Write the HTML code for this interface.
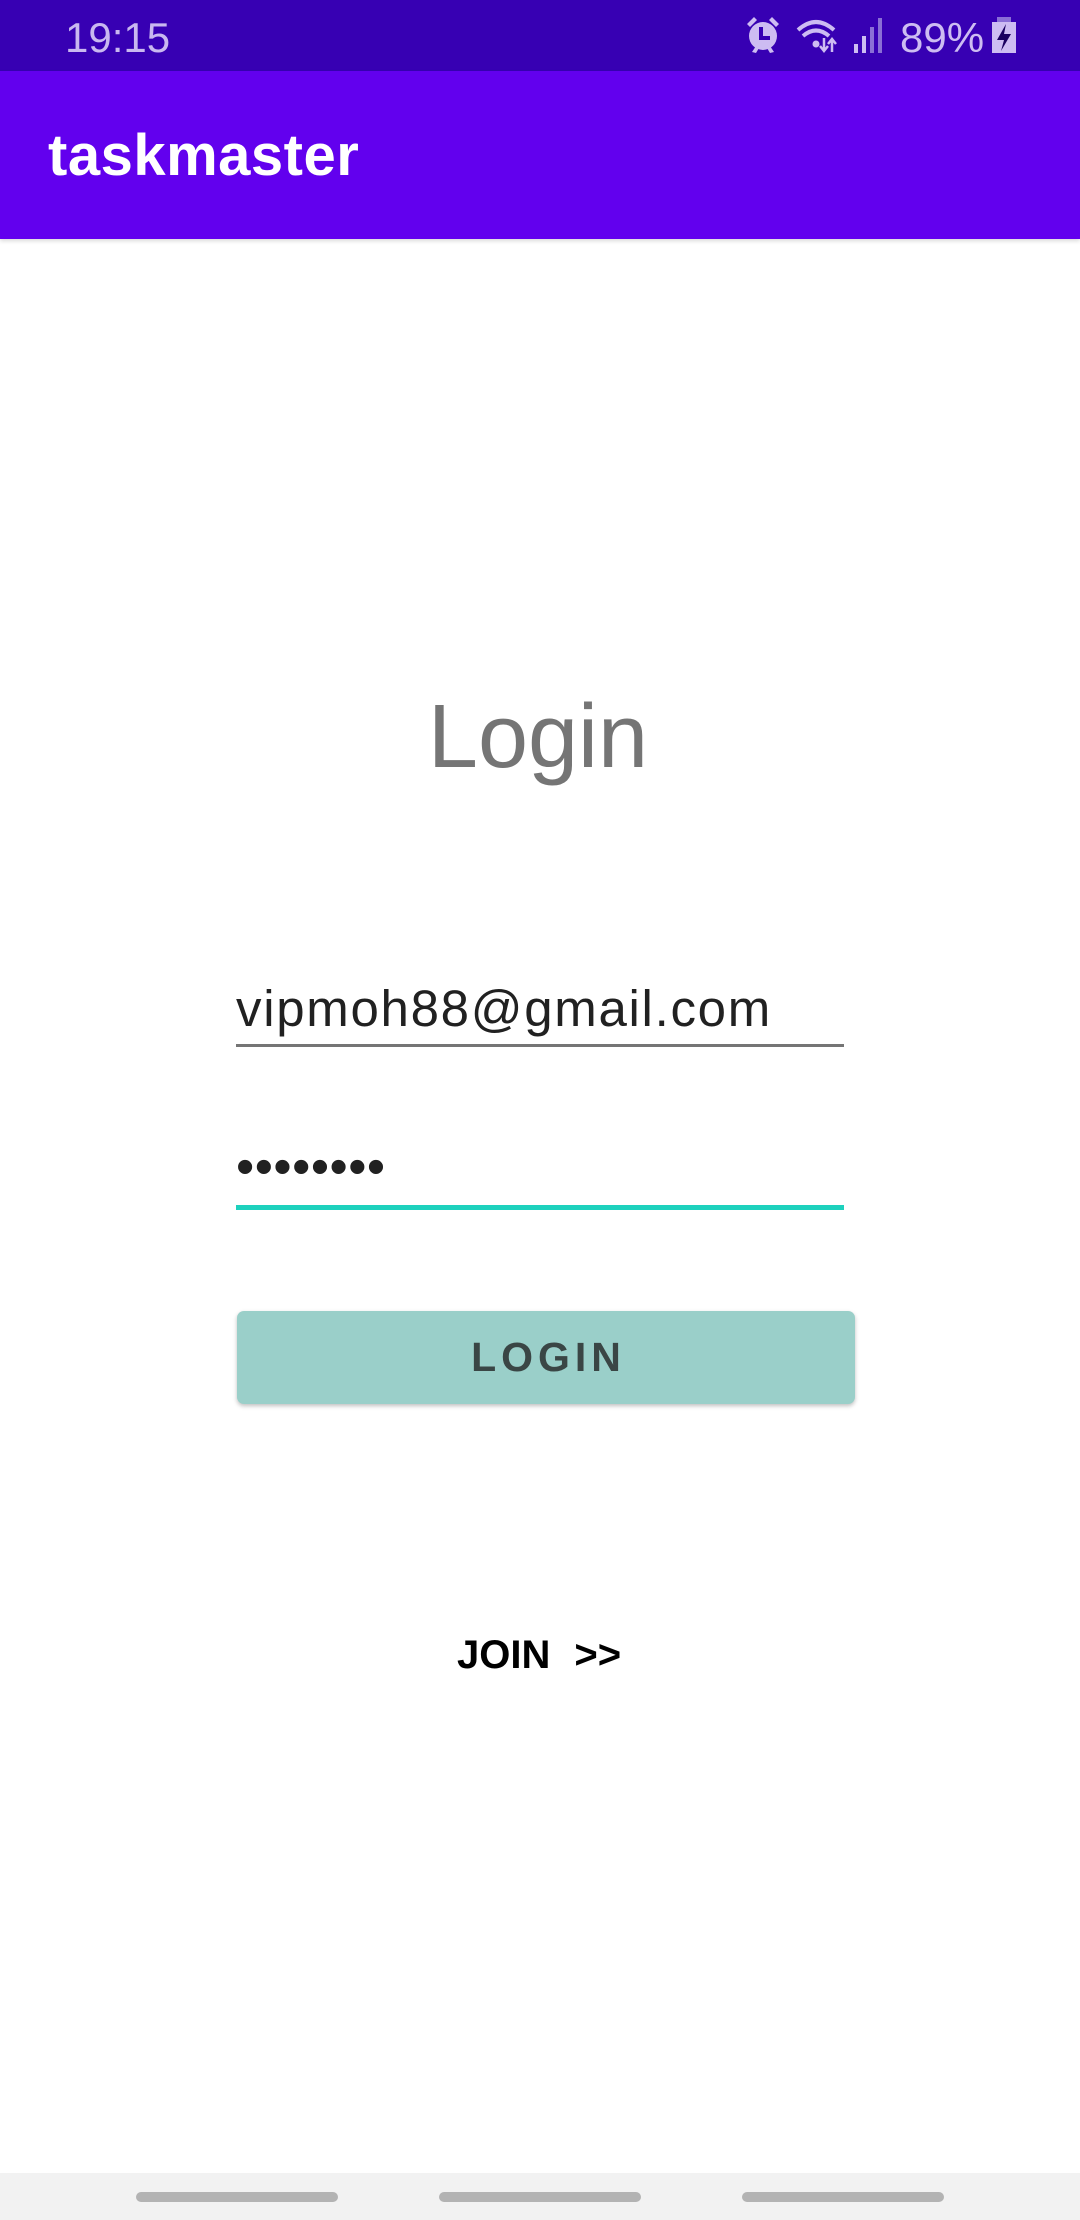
<!DOCTYPE html>
<html><head><meta charset="utf-8"><style>
*{margin:0;padding:0;box-sizing:border-box}
body{width:1080px;height:2220px;position:relative;background:#fff;font-family:"Liberation Sans",sans-serif;overflow:hidden}
.abs{position:absolute}
</style></head><body>
<div class="abs" style="left:0;top:0;width:1080px;height:71px;background:#3700B3"></div>
<div class="abs" style="left:65px;top:13px;font-size:42px;color:#c9b8f0;line-height:50px">19:15</div>
<svg class="abs" style="left:740px;top:14px" width="280" height="44" viewBox="740 14 280 44">
 <g fill="#cdbcf2">
  <circle cx="763" cy="36" r="14"/>
  <path d="M747 24 L754 17 L757 20 L750 27Z M779 24 L772 17 L769 20 L776 27Z"/>
  <path d="M752 52 L756 46 L759 48 L756 53Z M774 52 L770 46 L767 48 L770 53Z"/>
 </g>
 <path d="M761 27 V38 H770" stroke="#3700B3" stroke-width="4" fill="none"/>
 <g fill="none" stroke="#cdbcf2" stroke-width="4">
  <path d="M798 30 Q816 14 834 30"/><path d="M803 36 Q816 25 829 36"/>
 </g>
 <circle cx="816" cy="44" r="3.5" fill="#cdbcf2"/>
 <path d="M824 38 V50 M820 46 L824 51 L828 46 M832 52 V40 M828 44 L832 39 L836 44" stroke="#cdbcf2" stroke-width="2.5" fill="none"/>
 <rect x="854" y="44" width="4" height="9" fill="#cdbcf2"/>
 <rect x="862" y="36" width="4" height="17" fill="#cdbcf2"/>
 <rect x="870" y="27" width="4" height="26" fill="#8a6fd6"/>
 <rect x="878" y="18" width="4" height="35" fill="#8a6fd6"/>
 <rect x="997" y="17" width="14" height="6" fill="#8a6fd6"/>
 <rect x="992" y="22" width="24" height="31" fill="#cdbcf2"/>
 <path d="M1006 24 L997 40 L1004 40 L1001 51 L1011 34 L1004 34 Z" fill="#1a0060"/>
</svg>
<div class="abs" style="left:900px;top:13px;font-size:42px;color:#cdbcf2;line-height:50px">89%</div>

<div class="abs" style="left:0;top:71px;width:1080px;height:168px;background:#6200EE;box-shadow:0 2px 4px rgba(0,0,0,0.15)"></div>
<div class="abs" style="left:48px;top:124px;font-size:58px;color:#fff;font-weight:bold;line-height:64px;letter-spacing:0.5px">taskmaster</div>

<div class="abs" style="left:0;top:682px;width:1076px;text-align:center;font-size:90px;color:#757575;line-height:110px">Login</div>

<div class="abs" style="left:236px;top:974px;font-size:51px;color:#212121;line-height:70px;letter-spacing:1.7px">vipmoh88@gmail.com</div>
<div class="abs" style="left:236px;top:1044px;width:608px;height:3px;background:#757575"></div>

<div class="abs" style="left:236px;top:1137px;font-size:52px;color:#212121;line-height:60px;letter-spacing:0.5px">••••••••</div>
<div class="abs" style="left:236px;top:1205px;width:608px;height:5px;background:#1dd1bd"></div>

<div class="abs" style="left:237px;top:1311px;width:618px;height:93px;background:#9acfc9;border-radius:7px;box-shadow:0 2px 4px rgba(0,0,0,0.25);text-align:center;font-size:41px;line-height:93px;letter-spacing:5px;color:#3a4645;font-weight:bold;padding-left:5px">LOGIN</div>

<div class="abs" style="left:457px;top:1627px;font-size:40px;color:#000;line-height:56px;font-weight:bold;white-space:nowrap">JOIN<span style="margin-left:24px">&gt;&gt;</span></div>

<div class="abs" style="left:0;top:2173px;width:1080px;height:47px;background:#f2f2f2"></div>
<div class="abs" style="left:136px;top:2192px;width:202px;height:10px;border-radius:5px;background:#b3b3b3"></div>
<div class="abs" style="left:439px;top:2192px;width:202px;height:10px;border-radius:5px;background:#b3b3b3"></div>
<div class="abs" style="left:742px;top:2192px;width:202px;height:10px;border-radius:5px;background:#b3b3b3"></div>
</body></html>
